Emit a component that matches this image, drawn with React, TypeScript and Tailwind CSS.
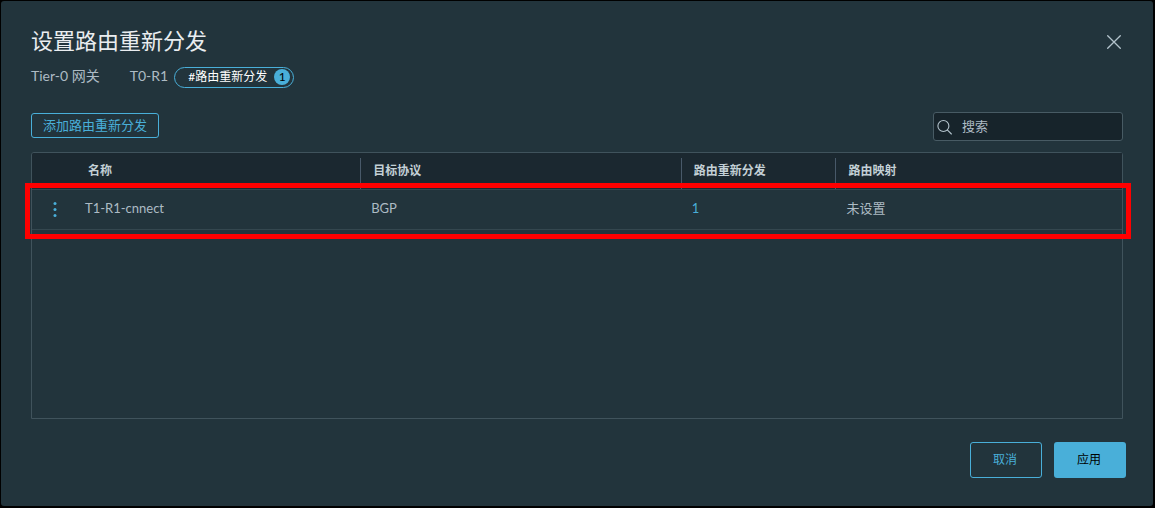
import { useState } from "react";

type Rule = { name: string; protocol: string; count: number; routeMap: string };

const rules: Rule[] = [
  { name: "T1-R1-cnnect", protocol: "BGP", count: 1, routeMap: "未设置" },
];

const columns = ["目标协议", "路由重新分发", "路由映射"];

function CloseIcon() {
  return (
    <svg viewBox="0 0 14 14" className="size-[14px]" fill="none" stroke="currentColor" strokeWidth="1.3" strokeLinecap="round" aria-hidden="true">
      <path d="M0.7 0.7 13.3 13.3M13.3 0.7 0.7 13.3" />
    </svg>
  );
}

function SearchIcon() {
  return (
    <svg viewBox="0 0 16 16" className="size-4 shrink-0" fill="none" stroke="currentColor" strokeWidth="1.1" strokeLinecap="round" aria-hidden="true">
      <circle cx="6.4" cy="7" r="5.5" />
      <path d="M10.5 11.1 14.4 15" />
    </svg>
  );
}

function MoreIcon() {
  return (
    <svg viewBox="0 0 4 16" className="h-4 w-1" fill="currentColor" aria-hidden="true">
      <circle cx="2" cy="2.5" r="1.5" />
      <circle cx="2" cy="8.5" r="1.5" />
      <circle cx="2" cy="14.5" r="1.5" />
    </svg>
  );
}

function RuleTable() {
  return (
    <table className="w-full table-fixed border-separate border-spacing-0 text-left">
      <colgroup>
        <col className="w-[47px]" />
        <col className="w-[25.8%]" />
        <col className="w-[29.4%]" />
        <col className="w-[14.2%]" />
        <col />
      </colgroup>
      <thead>
        <tr className="h-9 bg-[#1b2830] text-xs text-[#c3d0d6]">
          <th className="rounded-tl-[2px]" aria-label="操作" />
          <th className="p-0 pt-[5px] font-bold">
            <div className="flex h-[31px] pt-[5px] pl-[9px] leading-4">名称</div>
          </th>
          {columns.map((label) => (
            <th key={label} className="p-0 pt-[5px] font-bold">
              <div className="flex h-[31px] border-l border-[#485969] pt-[5px] pl-3 leading-4">{label}</div>
            </th>
          ))}
        </tr>
      </thead>
      <tbody>
        {rules.map((rule) => (
          <tr key={rule.name} className="relative h-[41px] text-[13px] text-[#adbbc4]">
            <td className="border-y border-[#34474f] pb-[2px] pl-[21px]">
              <button type="button" aria-label="更多操作" className="flex text-[#49afd9]">
                <MoreIcon />
              </button>
              <span className="pointer-events-none absolute -top-[6px] -right-[9px] -bottom-[9px] -left-[7px] border-[5px] border-[#ff0000]" />
            </td>
            <td className="border-y border-[#34474f] pb-[2px] pl-[6px]">{rule.name}</td>
            <td className="border-y border-[#34474f] pb-[2px] pl-[11px]">{rule.protocol}</td>
            <td className="border-y border-[#34474f] pb-[2px] pl-[11px]">
              <a href="#rules" className="text-[#49afd9]">{rule.count}</a>
            </td>
            <td className="border-y border-[#34474f] pb-[2px] pl-[11px]">{rule.routeMap}</td>
          </tr>
        ))}
      </tbody>
    </table>
  );
}

export default function App() {
  const [query, setQuery] = useState("");
  return (
    <div className="flex min-h-screen bg-black pt-px pr-[2px] pb-[2px] pl-px font-['Lato','Noto_Sans_CJK_SC',sans-serif]">
      <main className="flex flex-1 flex-col rounded-[3px] bg-[#22343c] pt-[25px] pr-[30px] pb-7 pl-[30px] text-[#adbbc4]">
        <header className="flex h-8 items-center justify-between pr-[2px]">
          <h1 className="pb-[2px] text-[22px] leading-[30px] text-[#eaedf0]">设置路由重新分发</h1>
          <button type="button" aria-label="关闭" className="text-[#b3c3cc]">
            <CloseIcon />
          </button>
        </header>

        <div className="mt-2 flex h-[22px] items-center text-sm leading-5">
          <span className="pb-[2px]">Tier-0 网关</span>
          <span className="ml-[30px] pb-[2px]">T0-R1</span>
          <span className="ml-[6px] flex h-[21px] items-center rounded-full border border-[#49afd9] pr-[3px] pl-[13px] text-xs text-white">
            #路由重新分发
            <span className="ml-[7px] flex size-4 items-center justify-center rounded-full bg-[#49afd9] text-black">1</span>
          </span>
        </div>

        <div className="mt-6 flex items-start justify-between">
          <button type="button" className="mt-px h-[25px] rounded-[3px] border border-[#49afd9] px-[11px] text-[13px] leading-[23px] text-[#49afd9]">
            添加路由重新分发
          </button>
          <label className="flex h-[29px] w-[190px] items-center rounded-[3px] border border-[#485b64] bg-[#17242b] pl-[3px] text-[#b3c3cc]">
            <SearchIcon />
            <input
              type="text"
              aria-label="搜索"
              placeholder="搜索"
              value={query}
              onChange={(event) => setQuery(event.target.value)}
              className="ml-[9px] min-w-0 flex-1 bg-transparent text-[13px] outline-none placeholder:text-[#adbbc4]"
            />
          </label>
        </div>

        <section className="mt-[11px] flex-1 rounded-t-[3px] border border-[#40535c]">
          <RuleTable />
        </section>

        <footer className="-mr-[3px] mt-[23px] flex justify-end gap-3 text-xs">
          <button type="button" className="h-9 w-[72px] rounded-[3px] border border-[#49afd9] pr-[2px] text-[#49afd9]">取消</button>
          <button type="button" className="h-9 w-[72px] rounded-[3px] bg-[#49afd9] pr-[2px] text-black">应用</button>
        </footer>
      </main>
    </div>
  );
}
